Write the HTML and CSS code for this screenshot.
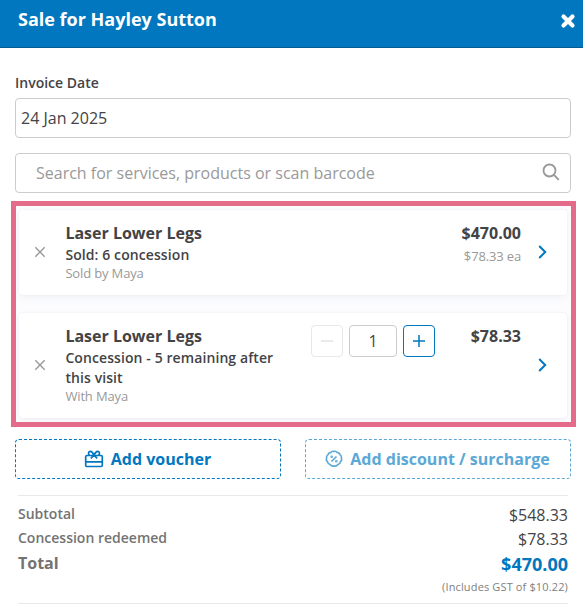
FILE: index.html
```html
<!DOCTYPE html>
<html lang="en">
<head>
<meta charset="utf-8">
<title>Sale for Hayley Sutton</title>
<link rel="stylesheet" href="styles.css">
</head>
<body>
<header class="header">
  <h1 class="title">Sale for Hayley Sutton</h1>
  <svg class="close" width="16" height="16" viewBox="0 0 16 16"><path d="M3.500 3.500l9 9M12.500 3.500l-9 9"/></svg>
</header>
<main class="content">
  <div class="label">Invoice Date</div>
  <div class="field">24 Jan 2025</div>
  <div class="field search"><span>Search for services, products or scan barcode</span>
    <svg class="search-icon" width="18" height="18" viewBox="0 0 18 18"><circle cx="7.500" cy="7.500" r="6"/><path d="M12 12l4.800 4.800"/></svg>
  </div>
  <section class="items">
    <article class="card first">
      <svg class="remove" width="12" height="12" viewBox="0 0 12 12"><path d="M1.300 1.300l9.400 9.400M10.700 1.300l-9.400 9.400"/></svg>
      <div class="details">
        <div class="name">Laser Lower Legs</div>
        <div class="desc">Sold: 6 concession</div>
        <div class="staff">Sold by Maya</div>
      </div>
      <div class="price">
        <div class="amount">$470.00</div>
        <div class="each">$78.33 ea</div>
      </div>
      <svg class="chevron" width="10" height="14" viewBox="0 0 10 14"><path d="M1.200 1l6 6-6 6"/></svg>
    </article>
    <article class="card second">
      <svg class="remove" width="12" height="12" viewBox="0 0 12 12"><path d="M1.300 1.300l9.400 9.400M10.700 1.300l-9.400 9.400"/></svg>
      <div class="details">
        <div class="name">Laser Lower Legs</div>
        <div class="desc">Concession - 5 remaining after this visit</div>
        <div class="staff">With Maya</div>
      </div>
      <div class="stepper">
        <div class="step minus"><svg width="14" height="14" viewBox="0 0 14 14"><path d="M1 7h12"/></svg></div>
        <div class="qty">1</div>
        <div class="step plus"><svg width="14" height="14" viewBox="0 0 14 14"><path d="M1 7h12M7 1v12"/></svg></div>
      </div>
      <div class="price"><div class="amount">$78.33</div></div>
      <svg class="chevron" width="10" height="14" viewBox="0 0 10 14"><path d="M1.200 1l6 6-6 6"/></svg>
    </article>
  </section>
  <div class="actions">
    <div class="action">
      <svg class="gift" width="20" height="18" viewBox="0 0 20 18"><rect x="1.700" y="5.500" width="16.600" height="11" rx="1.200"/><path d="M1.700 11.800h16.600M10 5.500C9 2.800 8 1.400 6.400 1.400 4.200 1.400 4 4 5.500 5.500M10 5.500c1-2.700 2-4.100 3.600-4.100 2.200 0 2.400 2.600.9 4.100M10 5.200L6.800 8.400M10 5.200l3.200 3.200"/></svg>
      <span>Add voucher</span>
    </div>
    <div class="action muted">
      <svg class="percent" width="18" height="18" viewBox="0 0 18 18"><path d="M9 1.500Q10.900.700 12.200 2.500Q14.500 2.500 14.900 4.700Q16.900 6 16.300 8.200Q17.300 10.300 15.500 11.700Q15.200 14 12.900 14.500Q11.400 16.600 9 16Q6.600 16.600 5.100 14.500Q2.800 14 2.500 11.700Q.700 10.300 1.700 8.200Q1.100 6 3.100 4.700Q3.500 2.500 5.800 2.500Q7.100.700 9 1.500zM6.500 11.500l5-5"/><circle cx="6.700" cy="6.700" r=".5"/><circle cx="11.300" cy="11.300" r=".5"/></svg>
      <span>Add discount / surcharge</span>
    </div>
  </div>
  <section class="totals">
    <div class="row"><span class="key">Subtotal</span><span class="value">$548.33</span></div>
    <div class="row"><span class="key">Concession redeemed</span><span class="value">$78.33</span></div>
    <div class="row total"><span class="key">Total</span><span class="value">$470.00</span></div>
    <div class="gst">(Includes GST of $10.22)</div>
  </section>
</main>
</body>
</html>
```
FILE: styles.css
```css
* { box-sizing: border-box; }
body { margin: 0; background: #fff; color: #434345; font: 16px/24px "Open Sans", sans-serif; }
svg { display: block; flex: none; fill: none; stroke: currentColor; }
.header { height: 48px; background: #0077be; border-bottom: 1px solid #005a92; color: #fff; display: flex; justify-content: space-between; padding: 7px 7px 0 18px; }
.title { margin: 0; font-size: 18px; line-height: 25px; font-weight: 700; }
.close { margin-top: 6px; stroke-width: 4.2; stroke-linecap: round; }
.content { padding: 25px 12px 0 15px; }
.label { font-size: 14px; line-height: 20px; font-weight: 600; margin-bottom: 5px; }
.field { height: 40px; border: 1px solid #ccc; border-radius: 4px; padding: 0 5px; line-height: 38px; margin-bottom: 15px; }
.search { display: flex; justify-content: space-between; align-items: center; padding: 0 10px 0 20px; color: #999; margin-bottom: 8px; }
.search-icon { stroke-width: 1.8; margin-top: -2px; }
.items { margin: 0 -5px 12px -4px; height: 226px; border: 5px solid #e46b8a; background: #fcfcfe; padding: 4px 4px 0 3px; overflow: hidden; }
.card { display: flex; align-items: flex-start; background: #fff; border-radius: 4px; box-shadow: 0 0 2px rgba(60,70,100,.08), 0 3px 8px rgba(60,70,100,.05); padding: 11px 19px 0 15px; }
.first { height: 85px; margin-bottom: 18px; }
.second { height: 105px; }
.remove { align-self: center; color: #999; stroke-width: 1.4; margin: -12px 19px 0 0; }
.details { width: 226px; flex: none; padding-left: .4px; }
.name { font-weight: 700; line-height: 24px; }
.desc { font-size: 14px; line-height: 20px; font-weight: 600; letter-spacing: .09px; }
.staff { font-size: 13px; line-height: 17px; color: #999; letter-spacing: -.15px; }
.price { margin-left: auto; text-align: right; }
.amount { font-weight: 700; }
.each { font-size: 13px; line-height: 22px; color: #999; letter-spacing: -.15px; }
.chevron { align-self: center; color: #0077be; stroke-width: 2; margin: -12px 0 0 17px; }
.stepper { display: flex; gap: 6px; margin: 1px 0 0 20px; }
.step, .qty { height: 32px; border: 1px solid #ccc; border-radius: 4px; display: flex; align-items: center; justify-content: center; }
.step { width: 32px; }
.step svg { stroke-width: 1.5; }
.qty { width: 48px; }
.minus { color: #e3e3e3; border-color: #e8e8e8; }
.plus { color: #0077be; border-color: #0077be; }
.actions { display: grid; grid-template-columns: 1fr 1fr; gap: 24px; margin-bottom: 16px; }
.action { height: 40px; border: 1px dashed #0077be; border-radius: 4px; display: flex; align-items: center; justify-content: center; gap: 7px; color: #0077be; font-weight: 700; padding-right: 1px; }
.gift { stroke-width: 1.7; }
.muted { color: #5ba8d6; border-color: #5ba8d6; }
.percent { stroke-width: 1.6; }
.totals { margin: 0 3px; height: 109px; border-top: 1px solid #e8e8e8; border-bottom: 1px solid #e8e8e8; padding-top: 7px; }
.row { display: flex; justify-content: space-between; height: 24px; }
.key { font-size: 14px; font-weight: 600; line-height: 22px; color: #737373; }
.total .key { font-size: 16px; font-weight: 700; line-height: 25px; }
.total .value { font-size: 18px; font-weight: 700; line-height: 27px; color: #0077be; }
.gst { font-size: 11px; line-height: 24px; text-align: right; color: #808080; letter-spacing: .14px; }
```
